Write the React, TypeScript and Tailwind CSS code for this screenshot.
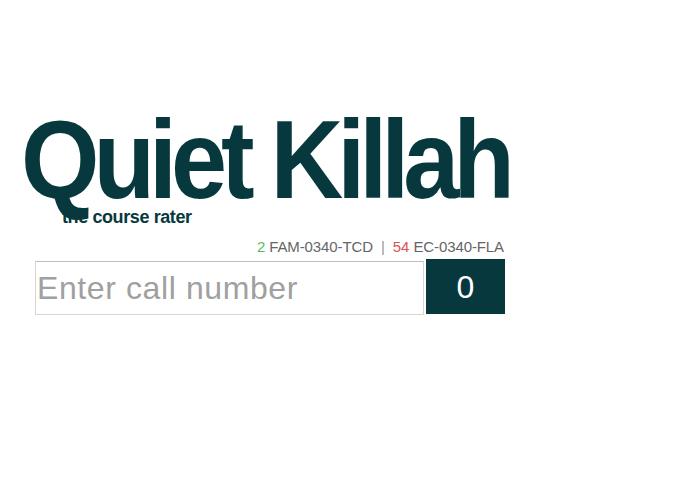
import React from 'react'

export default function App() {
  return (
    <div className="min-h-screen w-full bg-white font-['Liberation_Sans',Arial,sans-serif]">
      <div className="flex flex-col pl-[22px] pt-[112px]">
        {/* Logo */}
        <div className="origin-left scale-x-[0.9] -ml-[1px] text-[112px] font-bold leading-[96px] tracking-[-6.7px] text-[#07383d] whitespace-nowrap">
          Quiet Killah
        </div>
        <div className="ml-[40px] text-[18px] font-bold leading-[18px] tracking-[-0.4px] text-[#07383d]">
          the course rater
        </div>

        {/* Recent ratings */}
        <div className="mt-[13px] w-[482px] text-right text-[15px] leading-[15px] tracking-[-0.1px] text-[#666]">
          <span className="text-[#5cb85c]">2</span> FAM-0340-TCD
          <span className="mx-[8px] text-[#999]">|</span>
          <span className="text-[#d9534f]">54</span> EC-0340-FLA
        </div>

        {/* Search */}
        <div className="mt-[5px] ml-[13px] flex items-start gap-[2px]">
          <input
            type="text"
            placeholder="Enter call number"
            className="mt-[2px] h-[54px] w-[389px] border border-[#d6d6d6] border-t-[#bdbdbd] pl-[1px] pr-0 text-[32px] tracking-[0.6px] text-[#555] placeholder:text-[#a0a0a0] outline-none"
          />
          <button className="h-[55px] w-[79px] bg-[#07383d] text-[32px] text-white leading-none">
            0
          </button>
        </div>
      </div>
    </div>
  )
}
